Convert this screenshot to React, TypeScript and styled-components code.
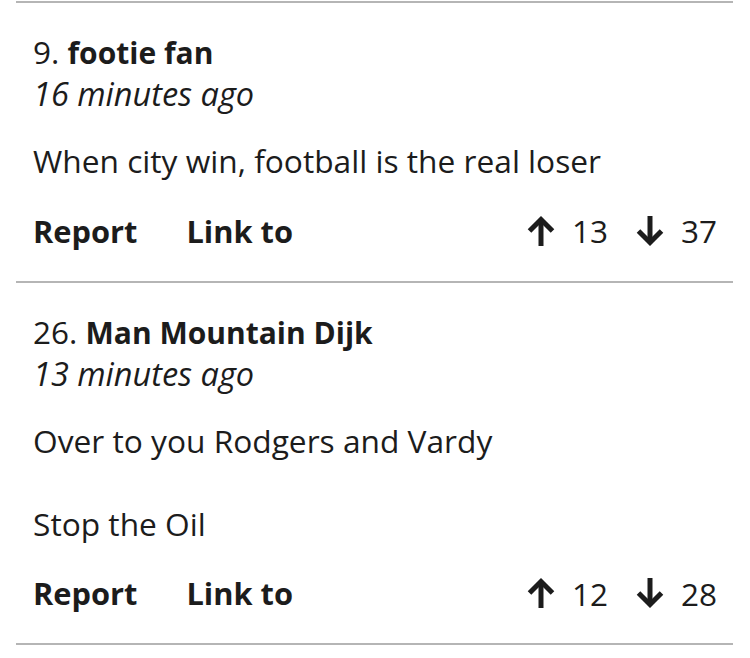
import React from 'react';
import styled, { createGlobalStyle } from 'styled-components';

const GlobalStyle = createGlobalStyle`
  html, body {
    margin: 0;
    padding: 0;
    background: #ffffff;
  }
  body {
    font-family: 'Open Sans', 'Noto Sans', sans-serif;
    color: #1c1c1c;
  }
`;

const CommentList = styled.div`
  width: 717px;
  margin: 1px 0 0 16px;
  border-top: 2px solid #b5b5b5;
`;

const CommentItem = styled.div`
  padding: 28px 16px 29px 17px;
  border-bottom: 2px solid #b5b5b5;
`;

const Header = styled.div`
  font-size: 31.5px;
  line-height: 42px;
  height: 42px;

  strong {
    font-weight: 700;
    font-size: 30px;
    line-height: 1;
  }
`;

const Time = styled.div`
  font-size: 32.5px;
  line-height: 42px;
  font-style: italic;
`;

const Body = styled.div`
  margin-top: 25px;
  font-size: 31.7px;
  line-height: 41.5px;

  p {
    margin: 0;
  }
  p + p {
    margin-top: 41.5px;
  }
`;

const Actions = styled.div`
  display: flex;
  align-items: center;
  margin-top: 28px;
  height: 42px;
`;

const ActionLink = styled.a`
  font-size: 30.8px;
  font-weight: 700;
  color: #1c1c1c;
  text-decoration: none;
  margin-right: 49px;
`;

const Votes = styled.div`
  margin-left: auto;
  display: flex;
  align-items: center;
`;

const Vote = styled.span`
  display: flex;
  align-items: center;
  font-size: 31.5px;
  gap: 16px;

  & + & {
    margin-left: 27px;
  }
`;

const Arrow = ({ down }: { down?: boolean }) => (
  <svg
    width="30"
    height="32"
    viewBox="0 0 30 32"
    style={down ? { transform: 'rotate(180deg)' } : undefined}
  >
    <path d="M15 31 V5" stroke="#1c1c1c" strokeWidth="5" fill="none" />
    <path
      d="M3.5 16 L15 4.5 L26.5 16"
      stroke="#1c1c1c"
      strokeWidth="5"
      fill="none"
      strokeLinejoin="miter"
    />
  </svg>
);

type CommentData = {
  index: number;
  author: string;
  time: string;
  paragraphs: string[];
  up: number;
  down: number;
};

const comments: CommentData[] = [
  {
    index: 9,
    author: 'footie fan',
    time: '16 minutes ago',
    paragraphs: ['When city win, football is the real loser'],
    up: 13,
    down: 37,
  },
  {
    index: 26,
    author: 'Man Mountain Dijk',
    time: '13 minutes ago',
    paragraphs: ['Over to you Rodgers and Vardy', 'Stop the Oil'],
    up: 12,
    down: 28,
  },
];

const App = () => {
  return (
    <>
      <GlobalStyle />
      <CommentList>
        {comments.map((c) => (
          <CommentItem key={c.index}>
            <Header>
              {c.index}. <strong>{c.author}</strong>
            </Header>
            <Time>{c.time}</Time>
            <Body>
              {c.paragraphs.map((p) => (
                <p key={p}>{p}</p>
              ))}
            </Body>
            <Actions>
              <ActionLink href="#">Report</ActionLink>
              <ActionLink href="#">Link to</ActionLink>
              <Votes>
                <Vote>
                  <Arrow />
                  {c.up}
                </Vote>
                <Vote>
                  <Arrow down />
                  {c.down}
                </Vote>
              </Votes>
            </Actions>
          </CommentItem>
        ))}
      </CommentList>
    </>
  );
};

export default App;
